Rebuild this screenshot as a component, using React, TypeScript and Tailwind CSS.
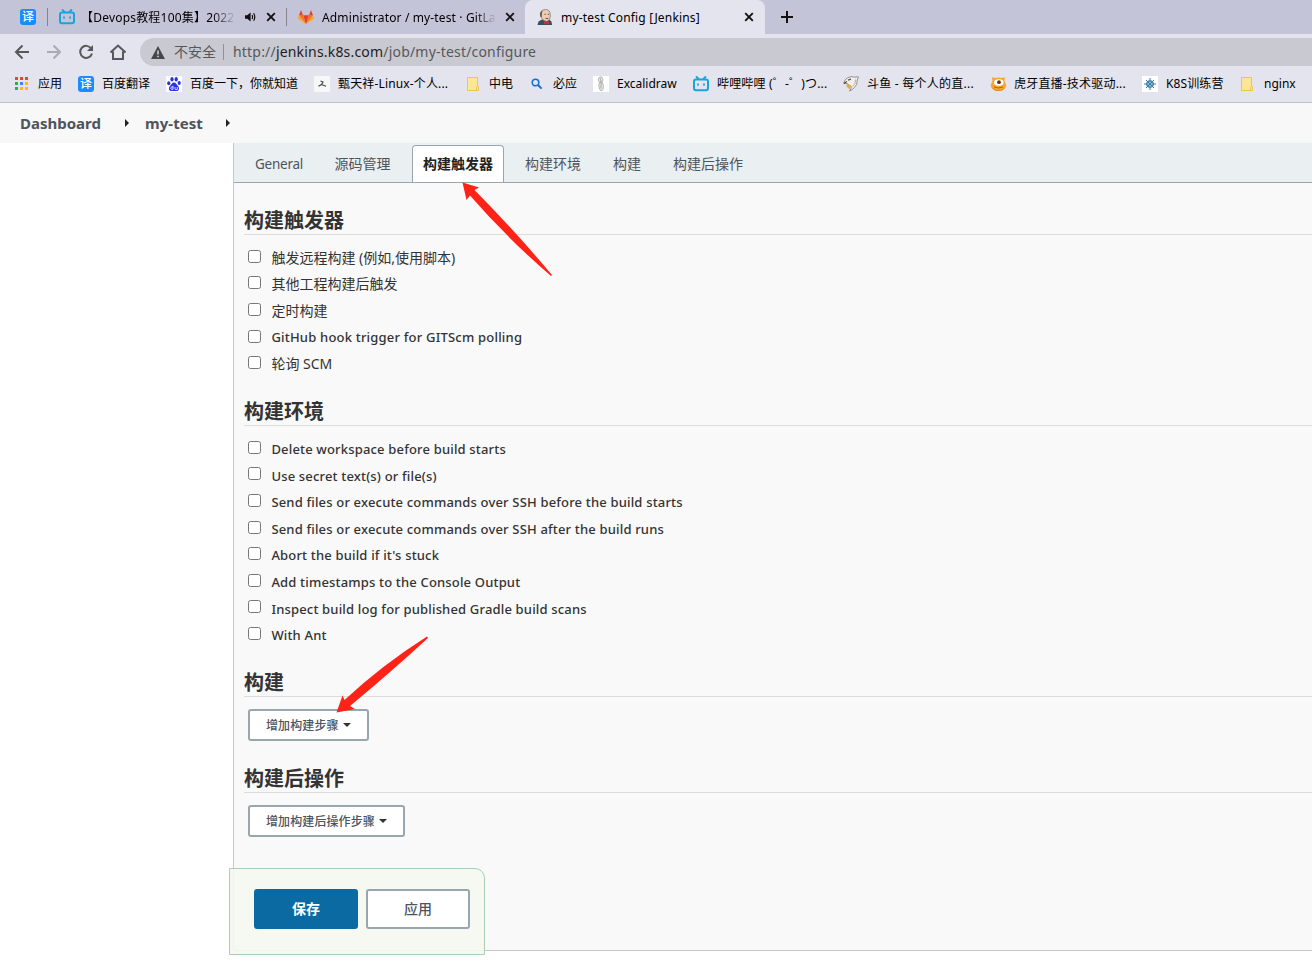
import React from "react";

type IconProps = { className?: string };

const TranslateIcon = () => (
  <span className="flex h-4 w-4 shrink-0 items-center justify-center rounded-[3px] bg-[#1a8cff] text-[12px] leading-4 font-medium text-white">
    译
  </span>
);

const BiliIcon = ({ className = "" }: IconProps) => (
  <svg width="16" height="16" viewBox="0 0 16 16" className={`shrink-0 ${className}`} fill="none" stroke="#14a6dc" strokeWidth="2">
    <path d="M3.600 1 L5.600 3 M12.400 1 L10.400 3" strokeWidth="1.800" strokeLinecap="round" />
    <rect x="1" y="3.600" width="14" height="10.600" rx="2" />
    <path d="M5 8v1M11 8v1" strokeLinecap="round" strokeWidth="1.700" />
  </svg>
);

const GitlabIcon = () => (
  <svg width="16" height="16" viewBox="0 0 16 16" className="shrink-0">
    <path d="M8 15.200 L5 6.200 H11Z" fill="#e24329" />
    <path d="M8 15.200 L5 6.200 H1Z" fill="#fc6d26" />
    <path d="M8 15.200 L11 6.200 H15Z" fill="#fc6d26" />
    <path d="M1 6.200 L0 9.400 L8 15.200Z" fill="#fca326" />
    <path d="M15 6.200 L16 9.400 L8 15.200Z" fill="#fca326" />
    <path d="M1 6.200 H5 L3 1Z" fill="#e24329" />
    <path d="M15 6.200 H11 L13 1Z" fill="#e24329" />
  </svg>
);

const JenkinsIcon = () => (
  <svg width="16" height="16" viewBox="0 0 16 16" className="shrink-0">
    <path d="M.5 16 L1.500 12.500 L5 10.500 H12 L14.500 12.500 L15 16Z" fill="#35505f" />
    <path d="M3.500 4 Q4.500 .4 8.500 .4 Q13.300 .7 13.300 6 Q13.300 11.800 9.500 12.400 Q5.500 12 4 8Z" fill="#eccdb3" stroke="#6b5a4e" strokeWidth=".6" />
    <path d="M3.200 7.500 Q2 3 5.500 1.200 L5 4.500 L4.800 8.500Z" fill="#6b625b" />
    <path d="M7.500 5.300h1.300M10.800 5.300h1.300M8.500 9.300q1.400.6 2.800 0" stroke="#4a403a" strokeWidth=".9" fill="none" />
    <path d="M7 12 L9.500 13.300 L12 12 V15.500 L9.500 14.400 L7 15.500Z" fill="#d0303a" />
  </svg>
);

const CloseIcon = () => (
  <svg width="10" height="10" viewBox="0 0 10 10" className="shrink-0" stroke="#111" strokeWidth="1.900">
    <path d="M1.200 1.200 L8.800 8.800 M8.800 1.200 L1.200 8.800" />
  </svg>
);

const SpeakerIcon = () => (
  <svg width="11" height="10" viewBox="0 0 11 10" className="shrink-0">
    <path d="M0 3.200h2.200L5.600.5v9L2.200 6.800H0Z" fill="#111" />
    <path d="M7 3q1.200 2 0 4M8.600 1.200q2.400 3.800 0 7.600" stroke="#111" strokeWidth="1.200" fill="none" />
  </svg>
);

const AppsIcon = () => {
  const colors = ["#ea4335", "#ea4335", "#ea4335", "#34a853", "#4285f4", "#fbbc05", "#34a853", "#fbbc05", "#fbbc05"];
  return (
    <svg width="13" height="13" viewBox="0 0 13 13" className="mr-px mb-px shrink-0">
      {colors.map((c, i) => (
        <rect key={i} x={(i % 3) * 5} y={Math.floor(i / 3) * 5} width="3" height="3" fill={c} />
      ))}
    </svg>
  );
};

const BaiduIcon = () => (
  <svg width="16" height="16" viewBox="0 0 16 16" className="shrink-0">
    <rect width="16" height="16" rx="1" fill="#fff" />
    <g fill="#2932e1">
      <ellipse cx="2.800" cy="7.200" rx="1.600" ry="2" />
      <ellipse cx="6" cy="3.200" rx="1.600" ry="2.200" />
      <ellipse cx="10.200" cy="3.200" rx="1.600" ry="2.200" />
      <ellipse cx="13.200" cy="7" rx="1.600" ry="2" />
      <path d="M8 6.600c2 0 2.500 2 4 3.300 1.800 1.600 1.200 5.100-1.400 5.100H5.400c-2.600 0-3.200-3.500-1.400-5.100C5.500 8.600 6 6.600 8 6.600Z" />
    </g>
    <path d="M7 9.800v3.600H5.700q-1-.2-1-1.200t1-1.200H7M9 11v2q.1.500.6.500h1.700V11" fill="none" stroke="#fff" strokeWidth=".8" />
  </svg>
);

const PersonIcon = () => (
  <svg width="16" height="16" viewBox="0 0 16 16" className="shrink-0">
    <rect width="16" height="16" fill="#f7f7f7" />
    <path d="M6.500 5 L9 6 L7.500 8.500 L4.500 10.300 M7.500 8.500 L12 10.200" stroke="#444" strokeWidth="1.200" fill="none" />
  </svg>
);

const FolderIcon = () => (
  <svg width="12" height="14" viewBox="0 0 12 14" className="shrink-0">
    <path d="M.5.500h10v9h1v4H.5Z" fill="#ffe694" stroke="#eec64f" />
    <path d="M9.500 13.500v-3.500" stroke="#eec64f" />
  </svg>
);

const SearchIcon = () => (
  <svg width="12" height="12" viewBox="0 0 12 12" className="shrink-0" fill="none" stroke="#1971c9">
    <circle cx="4.500" cy="4.500" r="3.300" strokeWidth="1.600" />
    <path d="M7 7 L10.600 10.600" strokeWidth="2" />
  </svg>
);

const ExcalidrawIcon = () => (
  <svg width="16" height="16" viewBox="0 0 16 16" className="shrink-0" fill="none">
    <rect width="16" height="16" fill="#fff" />
    <path d="M6 1.500 L8.500 .8 L10 3.500 L9 6 L6.500 6.500 L5.300 4Z M6.500 6.500 L5.800 9 L6.500 13 L8 15 L10 13.500 L10.500 9.500 L9 6" fill="#e6e6e6" stroke="#a6a6a6" strokeWidth=".8" />
    <path d="M7.500 2.500 L8.200 8 L7.800 12.500" stroke="#999" strokeWidth=".8" />
  </svg>
);

const DouyuIcon = () => (
  <svg width="16" height="16" viewBox="0 0 16 16" className="shrink-0">
    <path d="M.8 7.500 Q2 1.800 7 1 Q9 .2 11 1.200 L15.300 .8 Q15 3 14.200 4 Q14.800 8.500 11.500 11.500 Q9.500 13.800 6.500 15 Q8.500 12.500 8.300 10.500 L4 7.500Z" fill="#f2f0ef" stroke="#8b8582" strokeWidth=".9" />
    <path d="M12.500 3.500 Q13 8 9.500 10.500" fill="none" stroke="#a9a4a1" strokeWidth=".9" />
    <path d="M3.600 7.500 L8 9.500 L6.500 13.500 L3.600 10.500Z" fill="#e9ae2c" />
    <path d="M.8 7.500 L4 5.500 M5 4.200 L8 3.200" stroke="#5a504d" strokeWidth="1.400" />
  </svg>
);

const HuyaIcon = () => (
  <svg width="17" height="16" viewBox="0 0 17 16" className="shrink-0">
    <path d="M2.500 5 L2 1.300 L5.500 2 Q8.500.8 11.500 2 L14.800 1.300 L14.500 5 Q16 7.500 16.300 10 Q14.500 15 8.500 15 Q2.500 15 .6 10 Q1 7 2.500 5Z" fill="#f7a531" />
    <path d="M2 11.500 Q8.500 17.500 15 11.500 Q12.500 15 8.500 15 Q4.500 15 2 11.500Z" fill="#d9760f" />
    <ellipse cx="8.800" cy="6.500" rx="4.800" ry="3.300" fill="#fff" />
    <circle cx="9" cy="6.200" r="1.900" fill="#6b2f12" />
    <path d="M4 11 Q8.500 13 13 11" stroke="#b5610f" strokeWidth="1" fill="none" />
  </svg>
);

const HelmIcon = () => (
  <svg width="16" height="16" viewBox="0 0 16 16" className="shrink-0" fill="none" stroke="#3a7ca8">
    <rect width="16" height="16" fill="#fff" stroke="none" />
    <circle cx="8" cy="8" r="3.200" strokeWidth="1.300" />
    <path d="M8 2v12M2 8h12M4 4l8 8M12 4l-8 8" strokeWidth="1" />
    <circle cx="8" cy="8" r=".8" fill="#3a7ca8" />
  </svg>
);

const BookmarkLabel = ({ children, className = "" }: { children: React.ReactNode; className?: string }) => (
  <span className={`whitespace-pre ${className}`}>{children}</span>
);

function TabStrip() {
  return (
    <div className="flex h-[34px] items-stretch bg-[#c3c4d8] text-[12px] text-black">
      <div className="flex w-[47px] items-center pl-5">
        <TranslateIcon />
      </div>
      <div className="my-2 w-px bg-[#83848f]" />
      <div className="flex w-[238px] items-center pl-[11px]">
        <BiliIcon />
        <span className="ml-1.5 w-[155px] pt-[2px] whitespace-nowrap tracking-[0.2px] [mask-image:linear-gradient(to_right,black_85%,transparent)]">
          【Devops教程100集】2022
        </span>
        <span className="ml-[9px] flex">
          <SpeakerIcon />
        </span>
        <span className="ml-2.5 flex">
          <CloseIcon />
        </span>
      </div>
      <div className="my-2 w-px bg-[#83848f]" />
      <div className="flex w-[238px] items-center pl-[11px]">
        <GitlabIcon />
        <span className="ml-2 w-[174px] pt-[2px] whitespace-nowrap tracking-[0.13px] [mask-image:linear-gradient(to_right,black_88%,transparent)]">
          Administrator / my-test · GitLa
        </span>
        <span className="ml-[9px] flex">
          <CloseIcon />
        </span>
      </div>
      <div className="flex w-[240px] items-center rounded-t-lg bg-[#e4e4ee] pl-[12px]">
        <JenkinsIcon />
        <span className="ml-2 w-[179px] pt-[2px] whitespace-nowrap tracking-[0.18px]">my-test Config [Jenkins]</span>
        <span className="ml-1 flex">
          <CloseIcon />
        </span>
      </div>
      <div className="flex items-center pl-4">
        <svg width="12" height="12" viewBox="0 0 12 12" stroke="#111" strokeWidth="2">
          <path d="M6 0v12M0 6h12" />
        </svg>
      </div>
    </div>
  );
}

function AddressBar() {
  return (
    <div className="flex h-8 items-center bg-[#e4e4ee] pt-1 pl-3.5">
      <svg width="112" height="16" viewBox="0 0 112 16" fill="none" stroke="#56585c" strokeWidth="2" className="shrink-0">
        <path d="M15 8H2.500M8.500 1.500 L2 8 L8.500 14.500" />
        <path d="M33 8H45.500M39.500 1.500 L46 8 L39.500 14.500" stroke="#a9aab2" />
        <path d="M77.200 4.500 A6 6 0 1 0 78 9.500" />
        <path d="M79 1v6h-6z" fill="#56585c" stroke="none" />
        <path d="M96.500 8.500 L104 1.500 L111.500 8.500 M99 7.500 V15 H109 V7.500" />
      </svg>
      <div className="ml-3.5 flex h-7 flex-1 items-center rounded-l-full bg-[#c9c9d1] pl-[11px] text-[14px] text-[#56585c]">
        <svg width="14" height="13" viewBox="0 0 14 13" className="shrink-0">
          <path d="M7 0 L14 13H0Z" fill="#45474b" />
          <path d="M7 4.500v4M7 9.700v1.600" stroke="#d5d5dc" strokeWidth="1.500" />
        </svg>
        <span className="ml-[9px] pb-[2px]">不安全</span>
        <span className="mr-[9px] ml-[7px] h-4 w-px bg-[#909198]" />
        <span className="pb-[2px] whitespace-nowrap tracking-[0.19px]">
          http://<span className="text-[#1f2023]">jenkins.k8s.com</span>/job/my-test/configure
        </span>
      </div>
    </div>
  );
}

function Bookmarks() {
  return (
    <div className="flex h-[37px] items-center overflow-hidden border-b border-[#c2c2ce] bg-[#e4e4ee] pl-[15px] text-[12px] whitespace-nowrap text-black">
      <div className="flex w-[63px] shrink-0 items-center gap-[9px]"><AppsIcon /><BookmarkLabel>应用</BookmarkLabel></div>
      <div className="flex w-[88px] shrink-0 items-center gap-2"><TranslateIcon /><BookmarkLabel>百度翻译</BookmarkLabel></div>
      <div className="flex w-[148px] shrink-0 items-center gap-2"><BaiduIcon /><BookmarkLabel>百度一下，你就知道</BookmarkLabel></div>
      <div className="flex w-[153px] shrink-0 items-center gap-2"><PersonIcon /><BookmarkLabel className="tracking-[0.15px]">甄天祥-Linux-个人...</BookmarkLabel></div>
      <div className="flex w-[64px] shrink-0 items-center gap-[10px]"><FolderIcon /><BookmarkLabel>中电</BookmarkLabel></div>
      <div className="flex w-[62px] shrink-0 items-center gap-[10px]"><SearchIcon /><BookmarkLabel>必应</BookmarkLabel></div>
      <div className="flex w-[100px] shrink-0 items-center gap-2"><ExcalidrawIcon /><BookmarkLabel>Excalidraw</BookmarkLabel></div>
      <div className="flex w-[150px] shrink-0 items-center gap-2"><BiliIcon /><BookmarkLabel className="tracking-[0.18px]">哔哩哔哩 (゜-゜)つ...</BookmarkLabel></div>
      <div className="flex w-[147px] shrink-0 items-center gap-2"><DouyuIcon /><BookmarkLabel className="tracking-[0.25px]">斗鱼 - 每个人的直...</BookmarkLabel></div>
      <div className="flex w-[152px] shrink-0 items-center gap-[7px]"><HuyaIcon /><BookmarkLabel className="tracking-[0.2px]">虎牙直播-技术驱动...</BookmarkLabel></div>
      <div className="flex w-[99px] shrink-0 items-center gap-2"><HelmIcon /><BookmarkLabel className="tracking-[0.1px]">K8S训练营</BookmarkLabel></div>
      <div className="flex shrink-0 items-center gap-[11px]"><FolderIcon /><BookmarkLabel>nginx</BookmarkLabel></div>
    </div>
  );
}

const Caret = () => (
  <svg width="4" height="8" viewBox="0 0 4 8" className="shrink-0">
    <path d="M0 0 L4 4 L0 8Z" fill="#222" />
  </svg>
);

function Breadcrumbs() {
  return (
    <div className="flex h-10 items-center bg-[#f8f8f8] pl-5 text-[15px] font-bold text-[#4d545d]">
      <span className="w-[105px]">Dashboard</span>
      <Caret />
      <span className="ml-4 w-[81px] tracking-[0.05px]">my-test</span>
      <Caret />
    </div>
  );
}

const SectionTitle = ({ children, className }: { children: string; className: string }) => (
  <h2 className={`flex items-end border-b border-[#dcdcdc] text-[20px] leading-[26px] font-bold text-[#333] ${className}`}>{children}</h2>
);

const CheckRow = ({ label, className }: { label: string; className: string }) => (
  <label className="flex h-[26.6px] items-center pl-1 text-[#333]">
    <input type="checkbox" className="m-0 mb-[1.8px] h-[13px] w-[13px] shrink-0" />
    <span className={`ml-[10.4px] whitespace-nowrap ${className}`}>{label}</span>
  </label>
);

const StepButton = ({ label, className }: { label: string; className: string }) => (
  <button className={`ml-1 flex h-8 items-center rounded-[3px] border-2 border-[#98a6af] bg-white pl-4 text-[12px] font-medium text-[#4d545d] ${className}`}>
    <span className="pt-[2px] whitespace-nowrap tracking-[0.1px]">{label}</span>
    <svg width="8" height="4" viewBox="0 0 8 4" className="ml-1 shrink-0">
      <path d="M0 0H8L4 4Z" fill="#333" />
    </svg>
  </button>
);

const triggers = [
  { label: "触发远程构建 (例如,使用脚本)", style: "text-[14px]" },
  { label: "其他工程构建后触发", style: "text-[14px]" },
  { label: "定时构建", style: "text-[14px]" },
  { label: "GitHub hook trigger for GITScm polling", style: "pt-[2px] text-[13px] font-medium tracking-[0.2px]" },
  { label: "轮询 SCM", style: "text-[14px]" },
];

const environment = [
  "Delete workspace before build starts",
  "Use secret text(s) or file(s)",
  "Send files or execute commands over SSH before the build starts",
  "Send files or execute commands over SSH after the build runs",
  "Abort the build if it's stuck",
  "Add timestamps to the Console Output",
  "Inspect build log for published Gradle build scans",
  "With Ant",
];

function ConfigTabs() {
  return (
    <div className="flex h-10 items-end border-b border-[#98a6af] bg-[#eaeff2] text-[14px] leading-[37px] text-[#4d545d]">
      <span className="ml-[21px] w-[79.500px] text-[13.500px] leading-[35px] tracking-[-0.25px]">General</span>
      <span className="w-[77.500px]">源码管理</span>
      <span className="flex h-[37px] w-[92px] justify-center rounded-t-[4px] border border-b-0 border-[#98a6af] bg-white leading-[35px] font-bold text-[#222]">
        构建触发器
      </span>
      <span className="ml-[21px] w-[88px]">构建环境</span>
      <span className="w-[60px]">构建</span>
      <span>构建后操作</span>
    </div>
  );
}

export default function App() {
  return (
    <div className="relative flex h-[965px] w-[1312px] flex-col overflow-hidden bg-white font-['Noto_Sans','Noto_Sans_CJK_SC',sans-serif]">
      <TabStrip />
      <AddressBar />
      <Bookmarks />
      <Breadcrumbs />
      <main className="ml-[233px] h-[808px] shrink-0 rounded-bl-[3px] border-b border-l border-[#c6c6c6] bg-[#f9f9f9]">
        <ConfigTabs />
        <div className="ml-2.5">
          <SectionTitle className="h-[52px]">构建触发器</SectionTitle>
          <div className="pt-[9px]">
            {triggers.map((t) => (
              <CheckRow key={t.label} label={t.label} className={t.style} />
            ))}
          </div>
          <SectionTitle className="h-[49px]">构建环境</SectionTitle>
          <div className="pt-[9px]">
            {environment.map((label) => (
              <CheckRow key={label} label={label} className="pt-[3px] text-[13px] font-medium tracking-[0.17px]" />
            ))}
          </div>
          <SectionTitle className="h-[49.2px]">构建</SectionTitle>
          <div className="pt-3">
            <StepButton label="增加构建步骤" className="w-[121px]" />
          </div>
          <SectionTitle className="h-[52px]">构建后操作</SectionTitle>
          <div className="pt-3">
            <StepButton label="增加构建后操作步骤" className="w-[157px]" />
          </div>
        </div>
      </main>
      <div className="absolute top-[868px] left-[229px] flex h-[87px] w-[256px] gap-2 rounded-tr-[10px] border border-[#a8cdb9] bg-[#f5f8f0]/90 pt-5 pl-6 text-[14px] font-bold">
        <button className="h-10 w-[104px] rounded-[3px] bg-[#0b6aa2] pb-[2px] text-white">保存</button>
        <button className="h-10 w-[104px] rounded-[3px] border-2 border-[#98a6af] bg-white pb-[2px] font-medium text-[#4d545d]">应用</button>
      </div>
      <svg className="pointer-events-none absolute inset-0" width="1312" height="965" viewBox="0 0 1312 965" fill="#ff2216">
        <path d="M462.500 182.500 L479 187.500 L474.500 190 Q515 231 552 275 L551 276 Q507 238 470 195.500 L466.500 200Z" />
        <path d="M336.500 712.500 L342.500 695.500 L344.500 700 Q382 665 427 636.500 L428 638 Q391 672 350 706 L355 709Z" />
      </svg>
    </div>
  );
}
